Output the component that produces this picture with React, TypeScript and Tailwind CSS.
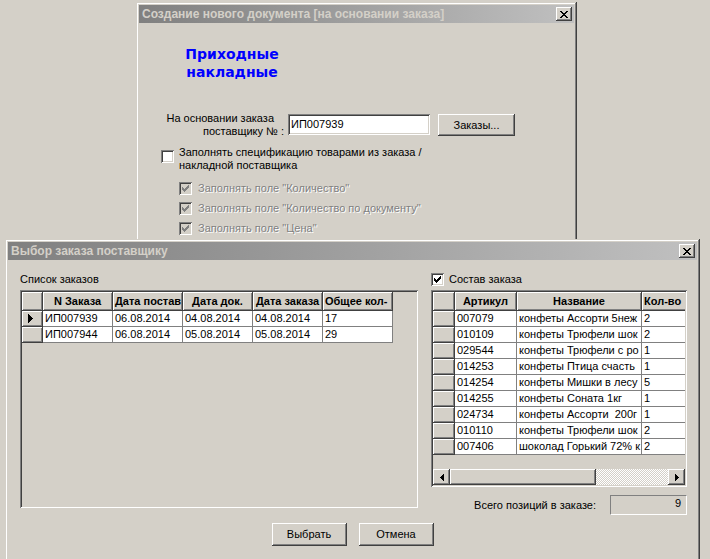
import React from "react";

const RAISED =
  "shadow-[inset_-1px_-1px_#404040,inset_1px_1px_#ffffff,inset_-2px_-2px_#808080,inset_2px_2px_#d4d0c8]";
const SUNKEN =
  "shadow-[inset_1px_1px_#808080,inset_-1px_-1px_#ffffff,inset_2px_2px_#404040,inset_-2px_-2px_#d4d0c8]";
const WINDOW =
  "shadow-[inset_-1px_-1px_#404040,inset_1px_1px_#d4d0c8,inset_-2px_-2px_#808080,inset_2px_2px_#ffffff]";

function CloseGlyph() {
  return (
    <svg width="8" height="7" viewBox="0 0 8 7" shapeRendering="crispEdges">
      <path
        fill="#000"
        d="M0 0h2v1H0z M6 0h2v1H6z M1 1h2v1H1z M5 1h2v1H5z M2 2h4v1H2z M3 3h2v1H3z M2 4h4v1H2z M1 5h2v1H1z M5 5h2v1H5z M0 6h2v1H0z M6 6h2v1H6z"
      />
    </svg>
  );
}

function TitleBar({ title }: { title: string }) {
  return (
    <div className="flex h-[18px] items-center bg-linear-to-r from-[#808080] to-[#c0c0c0] pl-[3px] pr-[2px]">
      <span className="flex-1 overflow-hidden whitespace-nowrap pt-[1px] text-[12px] font-bold text-[#d4d0c8]">
        {title}
      </span>
      <div className={`flex h-[14px] w-[16px] items-center justify-center bg-[#d4d0c8] ${RAISED}`}>
        <CloseGlyph />
      </div>
    </div>
  );
}

function CheckGlyph({ color }: { color: string }) {
  return (
    <svg width="7" height="7" viewBox="0 0 7 7" shapeRendering="crispEdges">
      <path
        fill={color}
        d="M6 0h1v1H6z M5 1h2v1H5z M0 2h1v1H0z M4 2h3v1H4z M0 3h2v1H0z M3 3h3v1H3z M0 4h5v1H0z M1 5h3v1H1z M2 6h1v1H2z"
      />
    </svg>
  );
}

function CheckBox({ checked, disabled }: { checked?: boolean; disabled?: boolean }) {
  return (
    <div
      className={`flex h-[13px] w-[13px] shrink-0 items-center justify-center ${SUNKEN} ${
        disabled ? "bg-[#d4d0c8]" : "bg-white"
      }`}
    >
      {checked && <CheckGlyph color={disabled ? "#808080" : "#000000"} />}
    </div>
  );
}

function Button({ children, w, h }: { children: React.ReactNode; w: string; h: string }) {
  return (
    <div className={`flex items-center justify-center bg-[#d4d0c8] ${RAISED} ${w} ${h}`}>{children}</div>
  );
}

type Col = { w: string; title: string; align: "left" | "center" };

const FIXED =
  "bg-[#d4d0c8] border-r border-b border-[#404040] shadow-[inset_1px_1px_#ffffff,inset_-1px_-1px_#808080]";

function RowArrow() {
  return (
    <svg width="5" height="9" viewBox="0 0 5 9" shapeRendering="crispEdges">
      <path fill="#000" d="M0 0h1v9H0z M1 1h1v7H1z M2 2h1v5H2z M3 3h1v3H3z M4 4h1v1H4z" />
    </svg>
  );
}

function Grid({
  cols,
  rows,
  indW,
  active,
  className,
  footer,
}: {
  cols: Col[];
  rows: string[][];
  indW: string;
  active?: number;
  className: string;
  footer?: React.ReactNode;
}) {
  return (
    <div className={`flex flex-col overflow-hidden bg-[#d4d0c8] p-[2px] ${SUNKEN} ${className}`}>
      <div className="flex flex-1 flex-col overflow-hidden">
        <div className="flex h-[19px] shrink-0">
          <div className={`${FIXED} ${indW} shrink-0`} />
          {cols.map((c, i) => (
            <div
              key={i}
              className={`${FIXED} ${c.w} flex shrink-0 items-center overflow-hidden whitespace-nowrap font-bold ${
                c.align === "center" ? "justify-center" : "justify-start pl-[2px]"
              }`}
            >
              {c.title}
            </div>
          ))}
        </div>
        {rows.map((r, ri) => (
          <div key={ri} className="flex h-[16px] shrink-0">
            <div className={`${FIXED} ${indW} flex shrink-0 items-center pl-[6px]`}>
              {active === ri && <RowArrow />}
            </div>
            {r.map((v, ci) => (
              <div
                key={ci}
                className={`${cols[ci].w} flex shrink-0 items-center overflow-hidden whitespace-pre border-r border-b border-[#808080] bg-white pl-[2px]`}
              >
                {v}
              </div>
            ))}
          </div>
        ))}
      </div>
      {footer}
    </div>
  );
}

function LeftArrow() {
  return (
    <svg width="4" height="7" viewBox="0 0 4 7" shapeRendering="crispEdges">
      <path fill="#000" d="M3 0h1v7H3z M2 1h1v5H2z M1 2h1v3H1z M0 3h1v1H0z" />
    </svg>
  );
}
function RightArrow() {
  return (
    <svg width="4" height="7" viewBox="0 0 4 7" shapeRendering="crispEdges">
      <path fill="#000" d="M0 0h1v7H0z M1 1h1v5H1z M2 2h1v3H2z M3 3h1v1H3z" />
    </svg>
  );
}

function HScroll() {
  return (
    <div className="flex h-[16px] shrink-0">
      <div className={`flex h-[16px] w-[17px] shrink-0 items-center justify-center bg-[#d4d0c8] ${RAISED}`}>
        <LeftArrow />
      </div>
      <div className={`h-[16px] w-[146px] shrink-0 bg-[#d4d0c8] ${RAISED}`} />
      <div className="h-[16px] flex-1 bg-[repeating-conic-gradient(#ffffff_0%_25%,#d4d0c8_0%_50%)] bg-[length:2px_2px]" />
      <div className={`flex h-[16px] w-[17px] shrink-0 items-center justify-center bg-[#d4d0c8] ${RAISED}`}>
        <RightArrow />
      </div>
    </div>
  );
}

const leftCols: Col[] = [
  { w: "w-[70px]", title: "N Заказа", align: "center" },
  { w: "w-[70px]", title: "Дата постав", align: "left" },
  { w: "w-[70px]", title: "Дата док.", align: "center" },
  { w: "w-[70px]", title: "Дата заказа", align: "center" },
  { w: "w-[70px]", title: "Общее кол-", align: "left" },
];
const leftRows = [
  ["ИП007939", "06.08.2014", "04.08.2014", "04.08.2014", "17"],
  ["ИП007944", "06.08.2014", "05.08.2014", "05.08.2014", "29"],
];

const rightCols: Col[] = [
  { w: "w-[62px]", title: "Артикул", align: "center" },
  { w: "w-[125px]", title: "Название", align: "center" },
  { w: "w-[64px]", title: "Кол-во", align: "left" },
];
const rightRows = [
  ["007079", "конфеты Ассорти 5неж", "2"],
  ["010109", "конфеты Трюфели шок", "2"],
  ["029544", "конфеты Трюфели с ро", "1"],
  ["014253", "конфеты Птица счасть", "1"],
  ["014254", "конфеты Мишки в лесу", "5"],
  ["014255", "конфеты Соната 1кг", "1"],
  ["024734", "конфеты Ассорти  200г", "1"],
  ["010110", "конфеты Трюфели шок", "2"],
  ["007406", "шоколад Горький 72% к", "2"],
];

const DISABLED_TEXT = "text-[#808080] [text-shadow:1px_1px_0_#ffffff]";

export default function App() {
  return (
    <div className="relative h-[559px] w-[710px] overflow-hidden bg-[#d4d0c8] font-['Liberation_Sans',Arial,sans-serif] text-[11px] leading-[13px] text-black">
      {/* Window 1 */}
      <div className={`absolute left-[136px] top-[2px] flex h-[300px] w-[441px] flex-col bg-[#d4d0c8] p-[3px] ${WINDOW}`}>
        <TitleBar title="Создание нового документа [на основании заказа]" />
        <div className="ml-[18px] mt-[22px] w-[150px] text-center font-['DejaVu_Sans',sans-serif] text-[14px] font-bold leading-[18px] text-[#0000ff]">
          Приходные
          <br />
          накладные
        </div>
        <div className="mt-[31px] flex items-start">
          <div className="w-[145px] text-right">
            <div className="pr-[10px]">На основании заказа</div>
            <div>поставщику № :</div>
          </div>
          <div className={`ml-[4px] mt-[2px] flex h-[21px] w-[142px] items-center bg-white pl-[3px] ${SUNKEN}`}>
            ИП007939
          </div>
          <div className="ml-[8px] mt-[2px]">
            <Button w="w-[77px]" h="h-[22px]">Заказы...</Button>
          </div>
        </div>
        <div className="ml-[22px] mt-[8px] flex items-start">
          <div className="mt-[4px]">
            <CheckBox />
          </div>
          <div className="ml-[5px]">
            Заполнять спецификацию товарами из заказа /
            <br />
            накладной поставщика
          </div>
        </div>
        <div className="ml-[40px] mt-[6px] flex flex-col">
          {["Заполнять поле \"Количество\"", "Заполнять поле \"Количество по документу\"", "Заполнять поле \"Цена\""].map(
            (t) => (
              <div key={t} className="flex h-[20px] items-center">
                <CheckBox checked disabled />
                <span className={`ml-[6px] ${DISABLED_TEXT}`}>{t}</span>
              </div>
            )
          )}
        </div>
      </div>

      {/* Window 2 */}
      <div className={`absolute left-[5px] top-[239px] flex h-[340px] w-[695px] flex-col bg-[#d4d0c8] p-[3px] ${WINDOW}`}>
        <TitleBar title="Выбор заказа поставщику" />
        <div className="flex items-start pl-[12px] pt-[13px]">
          <div className="flex w-[398px] flex-col">
            <div className="h-[13px]">Список заказов</div>
            <Grid
              cols={leftCols}
              rows={leftRows}
              indW="w-[21px]"
              active={0}
              className="mt-[4px] h-[218px] w-[398px]"
            />
          </div>
          <div className="ml-[13px] flex w-[256px] flex-col">
            <div className="flex h-[13px] items-center">
              <CheckBox checked />
              <span className="ml-[5px]">Состав заказа</span>
            </div>
            <Grid
              cols={rightCols}
              rows={rightRows}
              indW="w-[22px]"
              className="mt-[4px] h-[197px] w-[256px]"
              footer={<HScroll />}
            />
            <div className="mt-[8px] flex h-[20px] items-center justify-end">
              <span>Всего позиций в заказе:</span>
              <div className="ml-[14px] h-[20px] w-[77px] border-t border-l border-[#808080] border-r-white border-b-white border-r border-b pt-[1px] pr-[5px] text-right">
                9
              </div>
            </div>
          </div>
        </div>
        <div className="mt-[8px] flex justify-center gap-[12px]">
          <Button w="w-[75px]" h="h-[23px]">Выбрать</Button>
          <Button w="w-[75px]" h="h-[23px]">Отмена</Button>
        </div>
      </div>
    </div>
  );
}
